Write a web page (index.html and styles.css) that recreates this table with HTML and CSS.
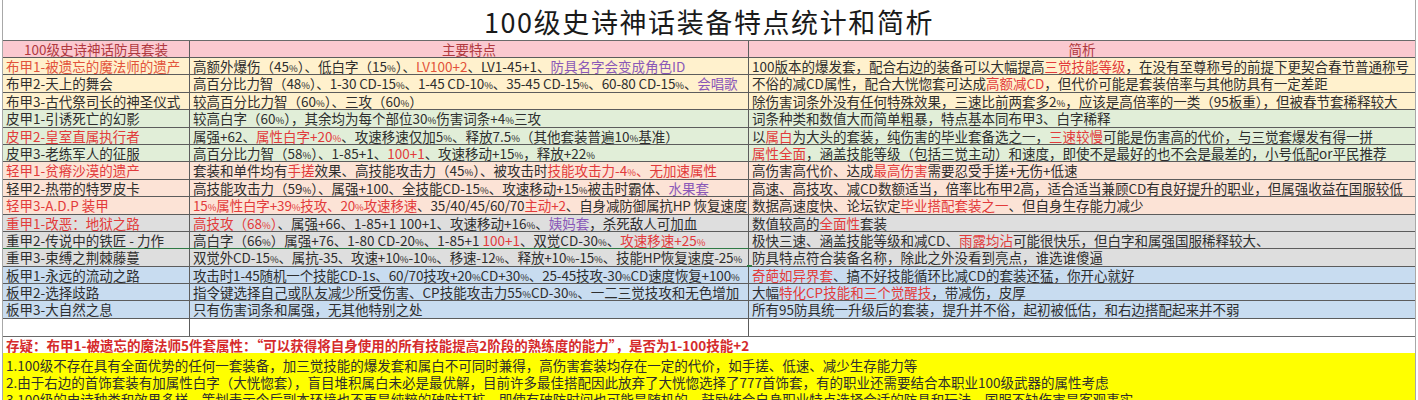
FILE: index.html
```html
<!DOCTYPE html>
<html lang="zh-CN">
<head>
<meta charset="utf-8">
<title>100级史诗神话装备特点统计和简析</title>
<link rel="stylesheet" href="styles.css">
</head>
<body>
<div class="sheet">
  <div class="title">100级史诗神话装备特点统计和简析</div>
  <div class="table">
    <div class="row head">
      <div class="c c1">100级史诗神话防具套装</div>
      <div class="c c2">主要特点</div>
      <div class="c c3">简析</div>
    </div>

    <div class="row cloth">
      <div class="c c1 o">布甲1-被遗忘的魔法师的遗产</div>
      <div class="c c2">高额外爆伤（45<span class="pc">%</span>）、低白字（15<span class="pc">%</span>）、<span class="o">LV100+2</span>、LV1-45+1、<span class="p">防具名字会变成角色ID</span></div>
      <div class="c c3">100版本的爆发套，配合右边的装备可以大幅提高<span class="r">三觉技能等级</span>，在没有至尊称号的前提下更契合春节普通称号</div>
    </div>
    <div class="row cloth">
      <div class="c c1">布甲2-天上的舞会</div>
      <div class="c c2 tight">高百分比力智（48<span class="pc">%</span>）、1-30 CD-15<span class="pc">%</span>、1-45 CD-10<span class="pc">%</span>、35-45 CD-15<span class="pc">%</span>、60-80 CD-15<span class="pc">%</span>、<span class="p">会唱歌</span></div>
      <div class="c c3">不俗的减CD属性，配合大恍惚套可达成<span class="r">高额减CD</span>，但代价可能是套装倍率与其他防具有一定差距</div>
    </div>
    <div class="row cloth">
      <div class="c c1">布甲3-古代祭司长的神圣仪式</div>
      <div class="c c2">较高百分比力智（60<span class="pc">%</span>）、三攻（60<span class="pc">%</span>）</div>
      <div class="c c3">除伤害词条外没有任何特殊效果，三速比前两套多2<span class="pc">%</span>，应该是高倍率的一类（95板重），但被春节套稀释较大</div>
    </div>

    <div class="row leather">
      <div class="c c1">皮甲1-引诱死亡的幻影</div>
      <div class="c c2">较高白字（60<span class="pc">%</span>），其余均为每个部位30<span class="pc">%</span>伤害词条+4<span class="pc">%</span>三攻</div>
      <div class="c c3">词条种类和数值大而简单粗暴，特点基本同布甲3、白字稀释</div>
    </div>
    <div class="row leather">
      <div class="c c1 r">皮甲2-皇室直属执行者</div>
      <div class="c c2">属强+62、<span class="r">属性白字+20<span class="pc">%</span></span>、攻速移速仅加5<span class="pc">%</span>、释放7.5<span class="pc">%</span>（其他套装普遍10<span class="pc">%</span>基准）</div>
      <div class="c c3">以<span class="r">属白</span>为大头的套装，纯伤害的毕业套备选之一，<span class="r">三速较慢</span>可能是伤害高的代价，与三觉套爆发有得一拼</div>
    </div>
    <div class="row leather">
      <div class="c c1">皮甲3-老练军人的征服</div>
      <div class="c c2">高百分比力智（58<span class="pc">%</span>）、1-85+1、<span class="r">100+1</span>、攻速移动+15<span class="pc">%</span>，释放+22<span class="pc">%</span></div>
      <div class="c c3"><span class="r">属性全面</span>，涵盖技能等级（包括三觉主动）和速度，即使不是最好的也不会是最差的，小号低配or平民推荐</div>
    </div>

    <div class="row light">
      <div class="c c1 r">轻甲1-贫瘠沙漠的遗产</div>
      <div class="c c2">套装和单件均有<span class="r">手搓</span>效果、高技能攻击力（45<span class="pc">%</span>）、被攻击时<span class="r">技能攻击力-4<span class="pc">%</span>、无加速属性</span></div>
      <div class="c c3">高伤害高代价、达成<span class="r">最高伤害</span>需要忍受手搓+无伤+低速</div>
    </div>
    <div class="row light">
      <div class="c c1">轻甲2-热带的特罗皮卡</div>
      <div class="c c2">高技能攻击力（59<span class="pc">%</span>）、属强+100、全技能CD-15<span class="pc">%</span>、攻速移动+15<span class="pc">%</span>被击时霸体、<span class="p">水果套</span></div>
      <div class="c c3">高速、高技攻、减CD数额适当，倍率比布甲2高，适合适当兼顾CD有良好提升的职业，但属强收益在国服较低</div>
    </div>
    <div class="row light">
      <div class="c c1 r">轻甲3-A.D.P 装甲</div>
      <div class="c c2 tight"><span class="r">15<span class="pc">%</span>属性白字+39<span class="pc">%</span>技攻、20<span class="pc">%</span>攻速移速</span>、35/40/45/60/70<span class="r">主动+2</span>、自身减防御属抗HP 恢复速度</div>
      <div class="c c3">数据高速度快、论坛钦定<span class="r">毕业搭配套装之一</span>、但自身生存能力减少</div>
    </div>

    <div class="row heavy">
      <div class="c c1 r">重甲1-改恶：地狱之路</div>
      <div class="c c2"><span class="r">高技攻（68<span class="pc">%</span>）</span>、属强+66、1-85+1 100+1、攻速移动+16<span class="pc">%</span>、<span class="p">姨妈套</span>，杀死敌人可加血</div>
      <div class="c c3">数值较高的<span class="r">全面性</span>套装</div>
    </div>
    <div class="row heavy">
      <div class="c c1">重甲2-传说中的铁匠 - 力作</div>
      <div class="c c2">高白字（66<span class="pc">%</span>）属强+76、1-80 CD-20<span class="pc">%</span>、1-85+1 <span class="r">100+1</span>、双觉CD-30<span class="pc">%</span>、<span class="r">攻速移速+25<span class="pc">%</span></span></div>
      <div class="c c3">极快三速、涵盖技能等级和减CD、<span class="r">雨露均沾</span>可能很快乐，但白字和属强国服稀释较大、</div>
    </div>
    <div class="row heavy sel">
      <div class="c c1">重甲3-束缚之荆棘藤蔓</div>
      <div class="c c2 tight">双觉外CD-15<span class="pc">%</span>、属抗-35、攻速+10<span class="pc">%</span>-10<span class="pc">%</span>、移速-12<span class="pc">%</span>、释放+10<span class="pc">%</span>-15<span class="pc">%</span>、技能HP恢复速度-25<span class="pc">%</span></div>
      <div class="c c3">防具特点符合装备名称，除此之外没看到亮点，谁选谁傻逼</div>
      <div class="selbox"></div>
    </div>

    <div class="row plate">
      <div class="c c1">板甲1-永远的流动之路</div>
      <div class="c c2 tight">攻击时1-45随机一个技能CD-1s、60/70技攻+20<span class="pc">%</span>CD+30<span class="pc">%</span>、25-45技攻-30<span class="pc">%</span>CD速度恢复+100<span class="pc">%</span></div>
      <div class="c c3"><span class="r">奇葩如异界套</span>、搞不好技能循环比减CD的套装还猛，你开心就好</div>
    </div>
    <div class="row plate">
      <div class="c c1">板甲2-选择歧路</div>
      <div class="c c2">指令键选择自己或队友减少所受伤害、CP技能攻击力55<span class="pc">%</span>CD-30<span class="pc">%</span>、一二三觉技攻和无色增加</div>
      <div class="c c3">大幅<span class="r">特化CP技能和三个觉醒技</span>，带减伤，皮厚</div>
    </div>
    <div class="row plate">
      <div class="c c1">板甲3-大自然之息</div>
      <div class="c c2">只有伤害词条和属强，无其他特别之处</div>
      <div class="c c3">所有95防具统一升级后的套装，提升并不俗，起初被低估，和右边搭配起来并不弱</div>
    </div>

    <div class="row blank">
      <div class="c c1"></div>
      <div class="c c2"></div>
      <div class="c c3"></div>
    </div>
  </div>

  <div class="doubt">存疑：布甲1-被遗忘的魔法师5件套属性：“可以获得将自身使用的所有技能提高2阶段的熟练度的能力”，是否为1-100技能+2</div>
  <div class="notes">
    <div class="line">1.100级不存在具有全面优势的任何一套装备，加三觉技能的爆发套和属白不可同时兼得，高伤害套装均存在一定的代价，如手搓、低速、减少生存能力等</div>
    <div class="line">2.由于右边的首饰套装有加属性白字（大恍惚套），盲目堆积属白未必是最优解，目前许多最佳搭配因此放弃了大恍惚选择了777首饰套，有的职业还需要结合本职业100级武器的属性考虑</div>
    <div class="line">3.100级的史诗种类和效果多样，策划表示今后副本环境也不再是纯粹的破防打桩，即使有破防时间也可能是随机的，鼓励结合自身职业特点选择合适的防具和玩法，国服不缺伤害是客观事实</div>
  </div>
</div>
</body>
</html>
```

FILE: styles.css
```css
html, body {
  margin: 0;
  padding: 0;
  background: #ffffff;
}

body {
  font-family: "Noto Sans CJK SC", "Noto Sans", sans-serif;
  color: #2e2e2e;
  font-size: 13.5px;
}

.sheet {
  margin-left: 2px;
  width: 1412px;
  height: 400px;
  overflow: hidden;
  border-left: 1px solid #a8a8a8;
  border-right: 1px solid #a8a8a8;
}

.title {
  height: 40px;
  box-sizing: border-box;
  padding-top: 4px;
  text-align: center;
  font-size: 27px;
  line-height: 36px;
  letter-spacing: 1.6px;
  color: #1a1a1a;
}

.table {
  border-top: 1px solid #6a6a6a;
}

.row {
  position: relative;
  display: grid;
  grid-template-columns: 187px 559px 1fr;
  height: 17.4px;
  box-sizing: border-box;
  border-bottom: 1px solid #5c5c5c;
}

.row.head {
  height: 17px;
  background: #fbc9d0;
  color: #b0393f;
}

.row.head .c {
  text-align: center;
}

.c {
  padding: 0 3px;
  white-space: nowrap;
  overflow-x: clip;
  overflow-y: visible;
  line-height: 16.4px;
  border-right: 1px solid #5c5c5c;
}

.c3 {
  border-right: none;
}

.tight {
  letter-spacing: -0.15px;
}

.pc {
  font-size: 9.5px;
}

.cloth { background: #fff1cd; }
.leather { background: #e1eed8; }
.light { background: #fce3d6; }
.heavy { background: #dedede; }
.plate { background: #c8dcf0; }

.row.blank {
  height: 18px;
  background: #ffffff;
  border-bottom: 1px solid #6a6a6a;
}

.r { color: #e23b3b; }
.o { color: #e2533a; }
.p { color: #8a58b8; }

.selbox {
  position: absolute;
  left: 0;
  top: -1px;
  width: 746px;
  height: 17.4px;
  border-top: 1px solid #2f7a45;
  border-bottom: 1px solid #2f7a45;
  pointer-events: none;
}

.selbox::after {
  content: "";
  position: absolute;
  right: -3px;
  bottom: -3px;
  width: 5px;
  height: 5px;
  background: #2f7a45;
}

.doubt {
  height: 16px;
  padding: 0 3px;
  line-height: 16px;
  font-weight: bold;
  color: #d52b2b;
  white-space: nowrap;
  overflow-x: clip;
}

.notes {
  background: #ffff00;
  padding-top: 4px;
  height: 60px;
}

.notes .line {
  padding: 0 3px;
  height: 17px;
  line-height: 17px;
  white-space: nowrap;
  overflow-x: clip;
}
```
